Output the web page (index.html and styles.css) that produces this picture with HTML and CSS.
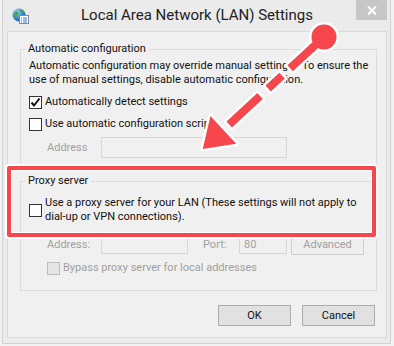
FILE: index.html
```html
<!DOCTYPE html>
<html>
<head>
<meta charset="utf-8">
<link rel="stylesheet" href="styles.css">
</head>
<body>
<div class="window">
  <div class="titlebar">
    <svg class="app-icon" width="17" height="17" viewBox="0 0 17 17">
      <defs>
        <radialGradient id="g" cx="0.35" cy="0.3" r="0.8">
          <stop offset="0" stop-color="#9fd7ff"/>
          <stop offset="0.6" stop-color="#2f7fd6"/>
          <stop offset="1" stop-color="#1b4f9e"/>
        </radialGradient>
      </defs>
      <circle cx="7" cy="7" r="6.5" fill="url(#g)"/>
      <path d="M2.5 4.5 C4 3 6 3.5 6.5 5 C7 6.5 5 7 4.5 8.5 C4 10 3 10 2 8.5 Z" fill="#3fa64a"/>
      <path d="M8 2 C10 1.8 12 3 12.5 5 L10 5.5 C9 4.5 8 3.5 8 2 Z" fill="#3fa64a"/>
      <rect x="7.5" y="7.5" width="9" height="8" fill="#fff" stroke="#7d8a99"/>
      <path d="M9 10h1M11 10h4M9 12h1M11 12h4M9 14h1M11 14h4" stroke="#3a78c9" stroke-width="1"/>
    </svg>
    <div class="title">Local Area Network (LAN) Settings</div>
    <div class="close">
      <svg width="10" height="9" viewBox="0 0 10 9"><path d="M1 0.5 L9 8.5 M9 0.5 L1 8.5" stroke="#fff" stroke-width="2"/></svg>
    </div>
  </div>
  <div class="panel">
    <fieldset class="group group-auto">
      <legend>Automatic configuration</legend>
      <p class="desc">Automatic configuration may override manual settings.&nbsp; To ensure the<br>use of manual settings, disable automatic configuration.</p>
      <div class="check-row row-first"><span class="box checked"><svg width="11" height="11" viewBox="0 0 11 11"><path d="M1.5 5.5 L4 8.5 L9.5 1.5" fill="none" stroke="#111" stroke-width="2"/></svg></span><span>Automatically detect settings</span></div>
      <div class="check-row row-second"><span class="box"></span><span>Use automatic configuration script</span></div>
      <div class="field-row"><span class="dim lbl-addr">Address</span><span class="input input-long"></span></div>
    </fieldset>
    <fieldset class="group group-proxy">
      <legend>Proxy server</legend>
      <div class="check-row proxy-row"><span class="box"></span><span>Use a proxy server for your LAN (These settings will not apply to<br>dial-up or VPN connections).</span></div>
      <div class="field-row proxy-fields">
        <span class="dim lbl-addr">Address:</span><span class="input input-mid"></span>
        <span class="dim lbl-port">Port:</span><span class="input input-port"><span class="dim">80</span></span>
        <span class="btn btn-adv">Advanced</span>
      </div>
      <div class="check-row bypass-row"><span class="box disabled"></span><span class="dim">Bypass proxy server for local addresses</span></div>
    </fieldset>
    <div class="actions">
      <span class="btn btn-main">OK</span>
      <span class="btn btn-main">Cancel</span>
    </div>
  </div>
</div>
<div class="highlight"></div>
<svg class="arrow" width="394" height="346" viewBox="0 0 394 346">
  <g transform="translate(324,37) rotate(137.3)" fill="#f5474c" stroke="#fff" stroke-width="5" paint-order="stroke" stroke-linejoin="round">
    <rect x="0" y="-4" width="46" height="8"/>
    <rect x="57" y="-4" width="19" height="8"/>
    <rect x="87" y="-4" width="42" height="8"/>
    <circle cx="0" cy="0" r="12.5"/>
    <rect x="-2" y="-4" width="20" height="8" stroke="none"/>
    <polygon points="137,-19 165,0 137,19"/>
  </g>
</svg>
</body>
</html>
```
FILE: styles.css
```css
html, body {
  margin: 0;
  padding: 0;
}
body {
  width: 394px;
  height: 346px;
  background: #f2f2f2;
  font-family: Roboto, "Noto Sans", sans-serif;
  font-size: 11px;
  color: #111;
  position: relative;
  overflow: hidden;
  white-space: nowrap;
}
.window {
  margin-left: 2px;
  width: 389px;
  height: 344px;
  box-sizing: border-box;
  border: 1px solid #d2d2d2;
  border-top: none;
  background: #ebebeb;
  padding: 0 3px 0 4px;
  display: flex;
  flex-direction: column;
}
.titlebar {
  height: 31px;
  display: flex;
  align-items: flex-start;
  position: relative;
}
.app-icon {
  margin: 8px 0 0 5px;
}
.title {
  position: absolute;
  left: 0;
  right: 0;
  top: 4px;
  text-align: center;
  font-size: 15px;
  line-height: 22px;
  color: #222;
}
.close {
  margin-left: auto;
  margin-right: 0;
  width: 31px;
  height: 20px;
  background: #c7c7c7;
  display: flex;
  align-items: center;
  justify-content: center;
}
.panel {
  height: 307px;
  box-sizing: border-box;
  border: 1px solid #dadada;
  background: #f0f0f0;
  padding: 10px 9px 0 12px;
}
.group {
  margin: 0;
  border: 1px solid #dcdcdc;
  padding: 0 8px 0 8px;
  min-width: 0;
}
.group legend {
  padding: 0 3px;
  margin-left: -4px;
  line-height: 14px;
}
.group-auto {
  height: 125px;
  box-sizing: border-box;
}
.group-proxy {
  margin-top: 7px;
  padding-bottom: 14px;
}
.desc {
  margin: 3px 0 0;
  line-height: 14px;
}
.check-row {
  display: flex;
  align-items: center;
  gap: 3px;
  line-height: 16px;
}
.row-first { margin-top: 7px; }
.row-second { margin-top: 6px; }
.box {
  width: 13px;
  height: 13px;
  box-sizing: border-box;
  border: 1px solid #333;
  background: #fff;
  flex: none;
  display: flex;
  align-items: center;
  justify-content: center;
}
.box.disabled {
  border-color: #bcbcbc;
  background: #e6e6e6;
}
.proxy-row {
  margin-top: 8px;
  line-height: 14px;
}
.field-row {
  display: flex;
  align-items: center;
  margin-top: 5px;
}
.dim {
  color: #a0a0a0;
}
.lbl-addr {
  margin-left: 18px;
  width: 54px;
}
.input {
  box-sizing: border-box;
  border: 1px solid #d7d7d7;
  background: #f0f0f0;
  height: 21px;
  display: flex;
  align-items: center;
  padding-left: 4px;
}
.input-long { width: 186px; }
.proxy-fields { margin-top: 9px; }
.input-mid { width: 87px; height: 20px; }
.lbl-port { margin-left: 15px; width: 36px; }
.input-port { width: 48px; height: 20px; }
.btn {
  box-sizing: border-box;
  border: 1px solid #adadad;
  background: #e1e1e1;
  display: flex;
  align-items: center;
  justify-content: center;
}
.btn-adv {
  margin-left: 4px;
  width: 73px;
  height: 22px;
  color: #a0a0a0;
  border-color: #cfcfcf;
  background: #efefef;
}
.bypass-row {
  margin-top: 5px;
  padding-left: 18px;
}
.actions {
  display: flex;
  justify-content: flex-end;
  gap: 11px;
  margin-top: 14px;
  padding-right: 2px;
}
.btn-main {
  width: 73px;
  height: 21px;
}
.highlight {
  position: absolute;
  left: 7px;
  top: 166px;
  width: 369px;
  height: 71px;
  box-sizing: border-box;
  border: 4px solid #f5474c;
  border-radius: 2px;
  box-shadow: 0 0 0 2px #fff, inset 0 0 0 1px #fff;
}
.arrow {
  position: absolute;
  left: 0;
  top: 0;
}
```
